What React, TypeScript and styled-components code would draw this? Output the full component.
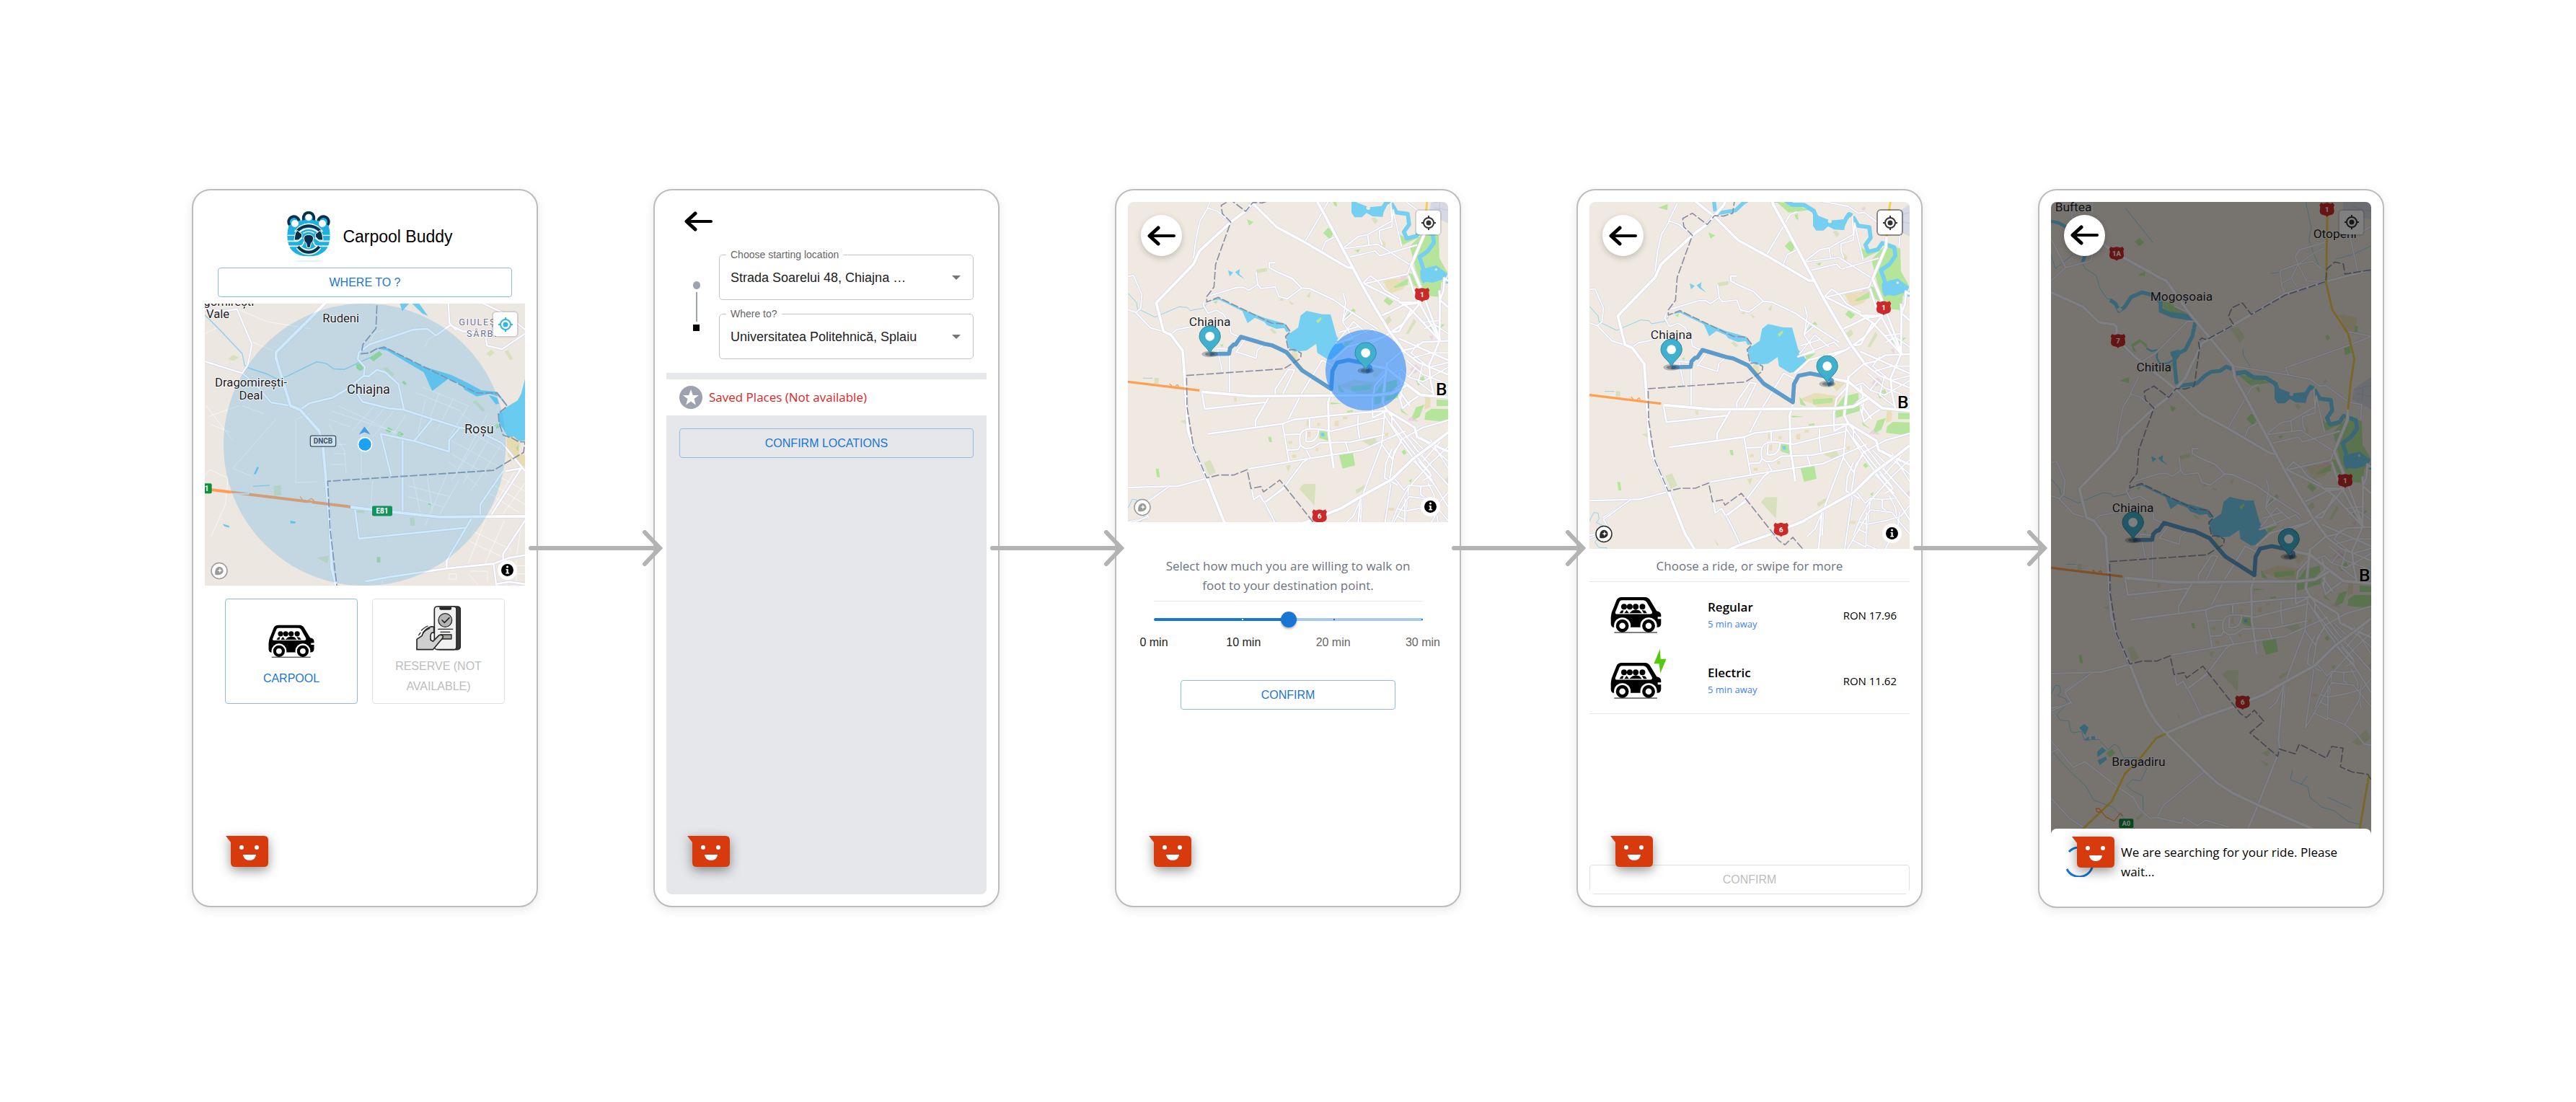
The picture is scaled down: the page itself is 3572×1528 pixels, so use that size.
import React from 'react';
import styled, { createGlobalStyle } from 'styled-components';

const GlobalStyle = createGlobalStyle`
  *, *::before, *::after { box-sizing: border-box; }
  body { margin: 0; background: #fff; }
  button, select, input { font: inherit; }
`;

const sans = '"Liberation Sans", Arial, sans-serif';
const human = '"Open Sans", "Segoe UI", sans-serif';
const mapFont = 'Roboto, "Noto Sans", sans-serif';
const blue = '#1976d2';

/* ---------- page and phone frames ---------- */

const Page = styled.main`
  min-height: 100vh;
  display: flex;
  align-items: center;
  padding: 0 266px 8px;
  font-family: ${human};
  color: #000;
`;

const Phone = styled.section`
  flex: 1 1 0;
  min-width: 0;
  padding: 16px;
  background: #fff;
  border: 2px solid #bcbcbc;
  border-radius: 26px;
  box-shadow: 0 4px 14px rgba(0, 0, 0, 0.09);
`;

const Screen = styled.div`
  position: relative;
  display: flex;
  flex-direction: column;
  min-height: 960px;
  border-radius: 8px;
  overflow: hidden;
`;

const Connector = styled.div`
  position: relative;
  z-index: 1;
  flex: 0 0 186px;
  margin: 0 -13px;
  display: flex;
  svg { display: block; width: 100%; height: 50px; }
`;

const FlowArrow = () => (
  <Connector aria-hidden="true">
    <svg viewBox="0 0 186 50" fill="none" stroke="#b3b3b3" strokeWidth="6" strokeLinecap="round">
      <path d="M3 25H181M161 3L182 25L161 47" />
    </svg>
  </Connector>
);

/* ---------- shared controls ---------- */

const OutlineButton = styled.button`
  display: flex;
  align-items: center;
  justify-content: center;
  height: 41px;
  padding: 0 16px;
  font-family: ${sans};
  font-size: 16px;
  line-height: 28px;
  color: ${blue};
  background: transparent;
  border: 1px solid #8fbbe9;
  border-radius: 4px;
  text-transform: uppercase;
  cursor: pointer;
  &:disabled { color: #bdbdbd; border-color: #e0e0e0; cursor: default; }
`;

const ChatButton = styled.button`
  position: absolute;
  left: 28px;
  bottom: 38px;
  width: 60px;
  height: 43px;
  padding: 0;
  border: 0;
  background: none;
  filter: drop-shadow(0 5px 8px rgba(0, 0, 0, 0.42));
  cursor: pointer;
  svg { display: block; width: 60px; height: 43px; }
`;

const Chat = () => (
  <ChatButton aria-label="Open chat">
    <svg viewBox="0 0 60 43">
      <path d="M1 0H54Q60 0 60 6V37Q60 43 54 43H14Q8 43 8 37V9Z" fill="#d63a0d" />
      <circle cx="23" cy="16" r="3" fill="#fff" />
      <circle cx="44" cy="16" r="3" fill="#fff" />
      <path d="M25 26H43A9 8 0 0 1 25 26Z" fill="#fff" />
    </svg>
  </ChatButton>
);

const ArrowLeft = () => (
  <svg width="40" height="28" viewBox="0 0 40 28" fill="none" stroke="#000" strokeLinecap="round" strokeLinejoin="round" aria-hidden="true">
    <path d="M4 14H37" strokeWidth="4" />
    <path d="M15 3L3 14L15 25" strokeWidth="5" />
  </svg>
);

const RoundBack = styled.button`
  position: absolute;
  top: 18px;
  left: 18px;
  width: 57px;
  height: 57px;
  display: grid;
  place-items: center;
  padding: 0;
  border: 0;
  border-radius: 50%;
  background: #fff;
  box-shadow: 0 3px 8px rgba(0, 0, 0, 0.2);
  cursor: pointer;
`;

const Back = () => (
  <RoundBack aria-label="Back"><ArrowLeft /></RoundBack>
);

/* ---------- map chrome ---------- */

const MapBox = styled.div<{ $h?: number; $square?: boolean }>`
  position: relative;
  overflow: hidden;
  ${p => (p.$square ? 'aspect-ratio: 1;' : '')}
  ${p => (p.$h ? `height: ${p.$h}px;` : '')}
  > svg { display: block; width: 100%; height: 100%; }
`;

const LocateButton = styled.button<{ $focus?: boolean }>`
  position: absolute;
  top: 12px;
  right: 11px;
  width: 33px;
  height: 33px;
  display: grid;
  place-items: center;
  padding: 0;
  border: 0;
  border-radius: 4px;
  background: #fff;
  box-shadow: 0 0 0 2px ${p => (p.$focus ? 'rgba(0,0,0,.4)' : 'rgba(0,0,0,.1)')};
  cursor: pointer;
`;

const Locate = ({ color = '#333', focus }: { color?: string; focus?: boolean }) => (
  <LocateButton $focus={focus} aria-label="Find my location">
    <svg width="20" height="20" viewBox="0 0 20 20" aria-hidden="true">
      <circle cx="10" cy="10" r="7" fill="none" stroke={color} strokeWidth="2" />
      <circle cx="10" cy="10" r="3.500" fill={color} />
      <path d="M10 0V4M10 16V20M0 10H4M16 10H20" stroke={color} strokeWidth="2" />
    </svg>
  </LocateButton>
);

const InfoButton = styled.button`
  position: absolute;
  right: 11px;
  bottom: 8px;
  width: 27px;
  height: 27px;
  display: grid;
  place-items: center;
  padding: 0;
  border: 0;
  border-radius: 50%;
  background: #fff;
  cursor: pointer;
`;

const MapMark = styled.a`
  position: absolute;
  left: 8px;
  bottom: 8px;
  svg { display: block; }
`;

const MapFooter = ({ tone = '#9a9a98' }: { tone?: string }) => (
  <>
    <MapMark href="#map" aria-label="Map provider">
      <svg width="24" height="25" viewBox="0 0 24 25">
        <circle cx="12" cy="12.5" r="11" fill="#fff" stroke={tone} strokeWidth="1.5" />
        <path d="M6.500 18C5.500 13 7 7.500 12 6.800A5.600 5.600 0 0 1 17.600 12.500C17.600 17 12 19 6.500 18Z" fill={tone} />
        <path d="M12.800 8.500L13.700 11.200L16.400 12L13.700 12.900L12.800 15.600L11.900 12.900L9.200 12L11.900 11.200Z" fill="#fff" />
      </svg>
    </MapMark>
    <InfoButton aria-label="Map information">
      <svg width="17" height="17" viewBox="0 0 17 17">
        <circle cx="8.500" cy="8.500" r="8.500" fill="#000" />
        <circle cx="8.500" cy="4" r="1.500" fill="#fff" />
        <path d="M6.500 7H9.700V12H11V13.500H6.300V12H7.500V8.300H6.500Z" fill="#fff" />
      </svg>
    </InfoButton>
  </>
);

/* ---------- map drawings (three units to the pixel) ---------- */

type Road = [string, number];

const Roads = ({ list }: { list: Road[] }) => (
  <g fill="none" strokeLinejoin="round">
    {list.map(([d, w]) => <path key={'c' + d} d={d} stroke="#d8daea" strokeWidth={w + 5} />)}
    {list.map(([d, w]) => <path key={d} d={d} stroke="#fff" strokeWidth={w} />)}
  </g>
);

const Place = ({ x, y, size = 52, children, fill = '#1f2226', spacing, halo = true }:
  { x: number; y: number; size?: number; children: string; fill?: string; spacing?: number; halo?: boolean }) => (
  <text x={x} y={y} fontFamily={mapFont} fontSize={size} fill={fill} textAnchor="middle" letterSpacing={spacing}
    stroke={halo ? 'rgba(255,255,255,.75)' : 'none'} strokeWidth={halo ? 6 : 0} paintOrder="stroke">{children}</text>
);

const Shield = ({ x, y, children }: { x: number; y: number; children: string }) => (
  <g transform={`translate(${x} ${y})`}>
    <path d="M-24 -29Q-17 -23 -10 -26Q0 -31 10 -26Q17 -23 24 -29L31 -19Q25 -10 29 -2Q32 8 28 15Q24 22 14 23Q4 24 0 30Q-4 24 -14 23Q-24 22 -28 15Q-32 8 -29 -2Q-25 -10 -31 -19Z" fill="#cc2a2a" />
    <text y="10" fontFamily={mapFont} fontSize="29" fontWeight="700" fill="#fff" textAnchor="middle">{children}</text>
  </g>
);

const Pin = ({ x, y }: { x: number; y: number }) => (
  <g transform={`translate(${x} ${y})`}>
    <ellipse cx="0" cy="0" rx="34" ry="13" fill="#203040" opacity=".28" />
    <ellipse cx="0" cy="0" rx="20" ry="8" fill="#203040" opacity=".4" />
    <path d="M0 -3C-8 -28 -44 -44 -44 -74A44 44 0 1 1 44 -74C44 -44 8 -28 0 -3Z" fill="#40b0cf" stroke="#2e8a9c" strokeWidth="3" />
    <circle cy="-74" r="19" fill="#fff" />
  </g>
);

const northRoads: Road[] = [
  ['M158 90L160 140L240 205M245 72L245 115L215 100M72 225L133 345L238 318L250 270M133 345L72 400', 5],
  ['M405 870L372 925L355 1000L345 1080M437 798L402 870L445 885L500 930', 5],
  ['M450 735L505 703L640 568L665 570M585 505L660 540', 5],
  ['M830 755L1060 792L1150 810L1190 838L1215 835L1310 905L1365 915L1360 975', 5],
  ['M1060 792L1048 762L1312 668L1402 632M1308 612L1402 630', 5],
  ['M1348 362L1318 225L1402 175M1210 240L1105 272L1088 300L1100 330L1025 358L1032 420L1045 455', 5],
  ['M1205 265L1165 285L1100 332L1072 388L1095 425M1100 332L1135 400L1215 403M1100 332L1160 320L1200 350M1032 410L1070 390', 4],
  ['M810 1010L880 890L905 845L935 832M878 1050L895 1010L935 990', 5],
  ['M965 1040L1030 990L1070 982L1170 925L1165 850M968 1040L1110 1022L1250 1110M995 1075L1100 1050L1120 1070L1275 1025M1070 985L1075 1028M1120 1000L1118 965L1170 950L1175 880L1210 1030M1120 1000L1130 1025', 5],
  ['M1215 403L1402 355', 9],
];

const midRoads: Road[] = [
  ['M72 382L95 378L130 458L125 515L105 532L72 520M105 532L165 595L222 612', 5],
  ['M250 622L275 603L340 590M500 617L495 580L470 540L440 522L405 535L385 500L390 485', 5],
  ['M412 462L525 428L555 427L575 440L612 415L605 362M612 415L625 432L685 425L700 465L735 475L795 430', 5],
  ['M685 325L660 325L660 345L690 362L755 390L795 430L830 433L930 480L985 520L1110 600', 6],
  ['M500 617L540 635M445 685L465 780M440 680L500 685M520 700L560 645M520 695L605 722L610 690L640 662M495 703L495 870', 5],
  ['M380 865L392 933L650 905M660 882L603 980L603 1005M405 1037L715 995L760 978L900 962L1150 940', 7],
  ['M685 880L685 850L740 768L765 772L712 880M790 878L740 975M788 878L880 730L930 755M740 768L765 772', 6],
  ['M918 860L905 905L908 1040L928 1178', 9],
  ['M715 995L742 1150M725 1040L785 1038M735 1105L780 1102L790 1085M790 1085Q780 1040 800 1025Q820 1010 870 1018L920 1025L1140 970M815 1025L812 1068M828 975L828 1012M812 1068Q850 1075 862 1040L865 1020M790 1085L810 1098L838 1095L870 1075L1000 1070L1140 1040', 6],
  ['M575 1182L820 1140L1045 1105L1225 1025M815 1105L832 1138M978 1075L990 1110M1030 960L1028 1000L1035 1055', 6],
  ['M72 1260L280 1254L400 1222M240 1258L130 1330L155 1385L72 1404', 6],
  ['M820 1142L800 1155L725 1255L640 1325M588 1270L595 1310L622 1292L668 1380L685 1404M640 1320L725 1262', 6],
  ['M968 452L978 490L965 570L985 600L1008 640M965 570L1010 530M985 520L968 560M950 615L1030 590M945 650L1010 570L1068 620M1008 640L940 660L1090 600L1110 620', 5],
  ['M925 730L985 675L1140 632L1215 580L1290 490L1200 490', 8],
  ['M1160 610L1215 690L1280 740L1404 790M1200 640L1404 730M1140 632L1080 660L1060 720', 7],
  ['M1290 490L1220 500L1160 530L1115 550M1240 380L1262 450L1370 650M1250 345L1290 430L1320 510L1372 650', 8],
  ['M1250 520L1370 650M1050 410L1200 485L1250 520L1200 610L1160 615', 8],
  ['M1045 415L1110 400L1235 372L1250 330M1050 410L1080 380L1110 400L1140 440L1200 475', 6],
  ['M1368 440L1370 480L1368 650L1325 750L1330 810L1345 880M1404 400L1388 390L1385 440L1370 480L1404 510', 8],
  ['M1404 650L1300 655L1262 680L1215 690L1150 745', 7],
  ['M1300 573L1365 565M1305 600L1345 580L1404 620M1280 660L1250 700L1325 760L1404 740M1260 720L1330 700L1404 700M1270 760L1240 800L1300 820L1404 760M1300 740L1280 820L1345 870M1230 730L1300 790L1404 830M1240 800L1210 770L1180 780', 5],
  ['M1150 740L1140 830L1132 905L1150 940L1265 1010L1275 1050L1350 1085L1404 1110', 10],
  ['M1050 745L1150 765L1230 830L1290 875L1404 885', 11],
  ['M1090 970L1088 900L1100 835L1150 780M1150 940L1090 970M1170 865L1210 830L1200 780M1200 880L1215 930L1250 900L1280 880M1195 850L1245 920M1215 830L1205 900', 7],
  ['M1150 940L1270 1100L1404 1250M1140 960L1210 1070L1290 1180L1345 1245L1404 1340M1140 950L1128 1080L1045 1300L1040 1404M1170 950L1170 1000L1240 1090L1330 1200', 6],
  ['M1128 1080L1170 1140L1210 1060L1300 1010L1404 980M1170 1100L1145 1160L1140 1220L1195 1250M1210 1070L1180 1110L1160 1230', 6],
  ['M1290 1050L1404 1150M1250 1140L1340 1230M1330 1060L1404 1180M1404 1090L1330 1160L1240 1260L1200 1330L1170 1404M1300 1100L1250 1050M1370 1070L1300 1150M1404 1030L1340 1080L1290 1130', 5],
  ['M1280 1150L1335 1210L1300 1230M1320 1240L1345 1290L1362 1404M1240 1260L1225 1404M1160 1230L1165 1260L1140 1404M1180 1220L1220 1270L1240 1250L1290 1255L1340 1250M1290 1255L1290 1290L1320 1310M1404 1280L1362 1330', 5],
];

const southRoads: Road[] = [
  ['M72 708L155 672L130 630L240 550M130 630L160 680', 5],
  ['M72 830L165 942L212 918L345 1020L415 1068L440 1115L485 1155L510 1150L615 1175L625 1150L680 1185L715 1162L810 1190', 5],
  ['M72 1070L150 1155L205 1190M72 880L105 865M715 955L540 1100L515 1145', 5],
  ['M1040 590L1018 830L1025 865L940 1080L918 1135L890 1200', 7],
  ['M640 612L670 670L700 735M1040 600L1010 670L978 700', 5],
  ['M1165 540L1130 778L1170 710L1240 590L1330 600L1362 640L1404 690M1225 600L1222 745L1165 715M1195 640L1225 650L1305 635L1355 620M1190 670L1222 685M1362 600L1355 660L1295 765L1222 735M1295 765L1340 800L1375 845L1404 850', 5],
];

const arterials: Road[] = [
  ['M72 448L205 508L272 573L335 582L345 592L345 640L420 715L590 850L690 950L810 1015L985 1118L1008 1120', 10],
  ['M240 205L300 255L345 287L520 385L552 400L640 525L735 640L830 755L835 800L885 890L1000 1105L1045 1190L1100 1285L1160 1385L1215 1460', 11],
  ['M1215 403L1045 455L905 540L830 583L735 640L700 660L630 805L560 885L500 930L370 1050L345 1105L190 1265L220 1385L250 1398L300 1465L312 1634L322 1795L345 1870L400 1995L470 2172L510 2237L550 2282L710 2440L765 2490L830 2532L935 2582L1165 2682', 11],
  ['M1308 935L1305 980L1250 1110L1290 1204', 11],
  ['M380 1636L585 1654L1100 1650L1170 1642L1230 1609', 11],
  ['M550 2282L700 2217L830 2172L960 2120L1040 2072L1170 2000L1255 1917L1340 1854L1404 1804', 11],
];

const boundaries = [
  'M1402 355L1295 372L1288 330L1252 322L1220 350L1215 403L1045 460L905 540L868 492L825 512L810 548L832 583L720 645L700 638L685 652L690 680L668 838L630 850L592 848L562 885L500 838L460 860L465 895L500 930L437 1105L430 1200L400 1240L400 1262L448 1243L670 1350L725 1354L748 1385L728 1405L740 1462L765 1460L793 1475L790 1497L720 1540L316 1568L318 1700L345 1868L400 1994L450 1982L512 1982L568 1960L584 2038L625 2030L636 2052L704 2003L860 2200L885 2217L918 2186L957 2232L900 2280L1015 2378L1022 2348L1088 2368L1105 2327L1217 2385L1240 2337L1287 2344L1276 2422L1325 2443L1390 2453L1404 2475',
];

const parks = [
  'M1245 1030L1310 965L1365 985L1368 1080L1402 1140L1375 1185L1372 1242L1310 1235L1270 1130Z',
  'M1197 975L1230 1000L1290 990L1215 1025Z',
  'M530 480L560 490L655 545L545 525Z', 'M850 790L920 800L985 825L900 835Z',
  'M885 975L905 953L930 972L912 1002Z', 'M420 238L440 222L460 240L440 257Z', 'M567 918L594 930L576 944Z',
  'M358 815L398 800L396 825Z', 'M925 845L938 840L942 865L932 862Z', 'M1015 1048L1038 1042L1030 1056Z',
  'M1290 678L1315 670L1320 700L1296 710Z', 'M1212 630L1225 625L1234 640L1220 648Z', 'M1337 588H1348V612H1335Z',
  'M1240 1142L1255 1145L1282 1205L1262 1195Z', 'M1136 1258L1150 1242L1177 1260L1160 1278Z',
  'M1175 1200L1235 1165L1238 1190L1185 1204Z', 'M975 1325L1010 1288L1020 1300L975 1332Z',
  'M1325 1360L1390 1355L1360 1385L1330 1380Z', 'M427 1262L445 1256L440 1270Z', 'M385 1285L400 1295L397 1305Z', 'M455 1440L470 1438L465 1450Z',
  'M950 1898L1008 1890L1017 1942L965 1955Z', 'M655 1823H668L672 1845H660Z', 'M188 1955L200 1957L205 1992L193 1990Z',
  'M1310 1724L1335 1706L1404 1708V1762L1306 1752Z', 'M1356 1668L1404 1670V1695H1356Z', 'M1255 1740L1270 1700L1305 1690L1285 1740L1260 1752Z',
  'M1094 1650L1130 1600L1190 1585L1197 1660L1130 1680L1098 1690Z', 'M1000 1612L1085 1606L1082 1626L1004 1634Z',
  'M915 1680L965 1684L915 1688Z', 'M867 1800L908 1798L905 1840L868 1828Z', 'M945 1600L975 1640L950 1635Z', 'M1205 1705L1240 1735L1210 1720Z',
  'M1210 1885L1222 1876L1232 1890L1220 1898Z', 'M983 1715L1008 1712V1720L985 1722Z', 'M970 1430L1015 1420L975 1450Z',
  'M1270 1590L1300 1570L1310 1590L1280 1610Z', 'M1240 2005L1255 1998L1248 2015Z', 'M300 2365L325 2347L340 2365L318 2383Z',
  'M405 665L440 643L470 662L474 685L445 655L415 675L428 695L415 693Z', 'M435 375L465 360L462 380L450 378L440 380Z', 'M550 760L580 740L575 765L550 790Z',
];

const scrub = [
  'M605 1128L650 1120V1135L608 1143Z', 'M815 1238L832 1218L828 1245Z', 'M740 1255L762 1270L752 1275Z', 'M662 1378L672 1370L692 1390L680 1395Z',
  'M818 600L850 590L878 635L858 660Z', 'M1228 1395L1262 1332L1270 1345L1240 1395Z', 'M1138 1340L1160 1320L1170 1340L1150 1358Z', 'M290 1758L318 1750L312 1770Z',
  'M388 1930L415 1920L438 1970L410 1985Z', 'M785 2040L802 2020L853 2018L848 2108Z', 'M1042 1838L1095 1822L1115 1852L1090 1865Z', 'M1018 2045L1058 2022L1060 2035L1025 2060Z',
  'M728 1944L750 1940L740 1968Z', 'M590 2190L610 2218L603 2220Z', 'M945 2365L985 2350L975 2380Z', 'M938 2390L978 2410L970 2420Z', 'M1325 2320L1385 2265L1400 2305L1355 2335Z',
  'M182 1578H200V1602H182Z', 'M425 2635L450 2615L458 2622L432 2645Z', 'M1085 915L1100 910L1112 925L1100 938Z', 'M700 1255L715 1245L720 1258Z',
];

const sand = [
  'M1133 1172L1190 1165L1250 1160L1215 1210L1160 1228Z', 'M755 1465L778 1475V1510L765 1520L752 1480Z', 'M945 1612L1010 1585L1118 1600L1095 1640L1050 1660L1000 1630Z',
  'M1265 538L1345 552L1338 612L1300 600Z', 'M1070 1535L1140 1540L1100 1580Z', 'M1128 1002L1145 1018L1140 1040L1125 1020Z', 'M1310 1650L1330 1640V1700L1305 1710Z',
  'M512 1658H525V1676H515Z', 'M932 1758L950 1755L948 1780L932 1778Z', 'M815 1755H828V1778H815Z', 'M820 1803L832 1800V1825H820Z', 'M858 1765H872V1778H858Z', 'M965 1740L985 1738V1750H967Z',
  'M740 1840H755V1853H740Z', 'M852 1870L865 1868V1882H854Z', 'M755 1898L772 1896V1910H756Z', 'M1140 1810L1155 1805V1822H1142Z', 'M1155 2118H1180V2130H1155Z',
];

const pink = ['M1245 1545L1270 1520L1295 1545L1260 1560Z', 'M1235 1755L1260 1730L1278 1760Z', 'M1205 1155L1232 1150L1230 1170H1208Z', 'M1202 818L1215 810L1222 818L1212 828Z', 'M1385 2005L1404 1990V2020Z', 'M1325 1405L1340 1400V1425Z'];

const towns: [string, number, number][] = [
  ['Chiajna', 413, 1362], ['Buftea', 165, 110], ['Otopeni', 1253, 221], ['Mogoșoaia', 615, 484],
  ['Chitila', 500, 778], ['Bragadiru', 436, 2418], ['Măgurele', 853, 2718],
];

const highways: [string, number, number][] = [
  ['1', 1220, 104], ['1A', 345, 287], ['7', 351, 650], ['1', 1296, 1232], ['6', 869, 2154],
];

const BucharestMap = ({ top, height, radius }: { top: number; height: number; radius?: boolean }) => {
  const inView = (y: number) => y > top && y < top + height + 40;
  return (
    <svg viewBox={`72 ${top} 1332 ${height}`} preserveAspectRatio="xMidYMin slice" role="img" aria-label="Map of the route">
      <rect x="0" y="0" width="1500" height="2800" fill="#efe9e1" />
      <path d="M1285 72H1404V145L1290 130ZM1332 850L1404 800V935L1325 895Z" fill="#d6d9e4" />
      <path d="M1345 850L1404 835M1345 870L1404 880M1370 845L1365 900M1320 90L1404 110" stroke="#c3c7dc" strokeWidth="3" />
      <g fill="#d8e0bd">{scrub.map(d => <path key={d} d={d} />)}</g>
      <g fill="#e8deb8">{sand.map(d => <path key={d} d={d} />)}</g>
      <g fill="#ebd3dc">{pink.map(d => <path key={d} d={d} />)}</g>
      <g fill="#b4e59a">{parks.map(d => <path key={d} d={d} />)}</g>
      <g fill="none" stroke="#75cff0" strokeLinejoin="round">
        <path d="M72 152L105 160L140 178L165 280M215 290L203 325" strokeWidth="14" />
        <path d="M318 480L340 495L355 525L378 510L405 468L450 448L497 460L528 490L528 520L570 542L620 548L655 556L672 575L660 630L630 688L585 710L588 770L595 830" strokeWidth="16" />
        <path d="M605 838L680 826L712 795L740 778L775 775L802 757L825 768" strokeWidth="16" />
        <path d="M840 785L880 780L915 802L965 804L1005 828L1018 860L1040 880L1080 878L1125 890L1140 860L1152 842L1165 848" strokeWidth="18" />
        <path d="M1168 852L1190 890L1236 896L1242 940L1220 970L1232 998L1272 988L1290 962L1340 980L1345 1015L1320 1050L1285 1075L1300 1120L1305 1170" strokeWidth="17" />
        <path d="M470 682L490 692L515 688L512 720L525 745L560 742L580 730" strokeWidth="8" />
        <g strokeWidth="3" opacity=".8">
          <path d="M203 330L215 350L260 378L275 430L305 475L330 478M382 98L495 240M1132 72L1155 180L1145 230L1170 300L1190 345M985 370L1020 365M1255 310L1330 290L1402 255M870 682L872 710L902 758M72 290L90 350L165 290" />
          <path d="M72 1225L108 1265L112 1290L185 1325L285 1282L320 1285L330 1298L385 1288L400 1270M135 1579H175" />
          <path d="M72 2120L90 2083L108 2085L112 2110L100 2125L135 2140L140 2160L95 2205L110 2228L145 2230L155 2275L165 2280L200 2275L210 2310L270 2308L310 2350L335 2328L350 2335L375 2385L430 2382L470 2430L445 2480L410 2475L385 2500L410 2520L455 2545L455 2600M75 2355L110 2395L150 2440L215 2500L250 2560L330 2590L420 2680M1077 2435L1068 2475L1140 2505L1150 2550L1200 2590L1250 2605L1310 2650L1360 2662M1112 2495L1138 2460M1222 2548L1322 2594" />
        </g>
      </g>
      <g fill="#75cff0">
        <path d="M1002 840L1075 868L1140 862L1132 908L1090 906L1065 892L1045 910H1015L1002 890Z" />
        <path d="M525 495L545 525L662 542L655 566L570 552L520 530Z" /><path d="M568 695L605 685L608 712L595 728L572 715Z" />
        <path d="M1288 1130L1320 1118L1355 1110L1402 1145L1392 1165L1340 1182L1312 1178L1300 1186L1290 1165Z" />
        <path d="M790 1319L815 1299L880 1313L915 1314L925 1349L940 1404L975 1449L935 1496L905 1502L860 1474L855 1436L815 1464L765 1469L742 1454L728 1404L780 1369Z" />
        <path d="M405 1260L450 1244L550 1292L640 1328L725 1352L748 1385L730 1386L722 1370L690 1374L650 1358L640 1345L600 1328L570 1350L548 1300L450 1252Z" />
        <path d="M489 1130L510 1140L495 1155Z" /><path d="M518 1138L538 1125L535 1145L558 1168L530 1150Z" />
        <path d="M190 2260L210 2243L228 2258L215 2290Z" /><path d="M208 2310L230 2295V2312Z" /><path d="M240 2295H255V2308H240Z" />
        <path d="M265 2358L285 2340L302 2355L265 2382Z" /><path d="M265 2395L300 2378L305 2392L275 2415Z" />
        <path d="M873 1808L888 1806L890 1820L878 1822Z" /><path d="M1395 1170L1404 1160V1185H1395Z" /><path d="M1388 1600H1404V1610Z" />
      </g>
      <path d="M855 1340L875 1325L878 1335L862 1352Z" fill="#b4e59a" />
      <circle cx="1072" cy="871" r="8" fill="#efe9e1" /><circle cx="1354" cy="1127" r="5" fill="#efe9e1" /><path d="M345 518L358 510L370 518L358 530Z" fill="#efe9e1" />
      <Roads list={northRoads} />
      <g transform="translate(0 774)"><Roads list={midRoads} /></g>
      <g transform="translate(0 1482)"><Roads list={southRoads} /></g>
      <Roads list={arterials} />
      <g fill="none" strokeLinejoin="round">
        <path d="M1222 72L1217 410L1242 520L1308 620L1334 725L1318 830L1308 935M550 2284L510 2302L440 2390L380 2450L325 2565L205 2680M1394 2460L1356 2680" stroke="#f3cf55" strokeWidth="9" />
        <path d="M72 1594L370 1630" stroke="#ff9f50" strokeWidth="10" />
        <path d="M245 1602L255 1612M270 1612L278 1606L284 1614M280 2612L262 2608L260 2595L272 2595L300 2630L335 2648L360 2615L372 2625" stroke="#ff9f50" strokeWidth="4" />
        <g stroke="#8a8ea3" strokeWidth="5">{boundaries.map(d => <path key={d} d={d} strokeDasharray="32 9" />)}</g>
        <path d="M413 1479L493 1477L497 1454L512 1439H520L542 1407L640 1436L670 1442L732 1471L797 1547L918 1624L923 1549L942 1514L990 1504L1050 1516L1080 1532V1546L1063 1552" stroke="#3d8bc5" strokeWidth="17" opacity=".82" />
      </g>
      {radius && <circle cx="1062" cy="1546" r="168" fill="#1a83ff" opacity=".56" />}
      {towns.filter(([, , y]) => inView(y)).map(([name, x, y]) => <Place key={name} x={x} y={y}>{name}</Place>)}
      <text x="1353" y="1650" fontFamily={mapFont} fontSize="74" fontWeight="500" stroke="#fff" strokeWidth="6" paintOrder="stroke">B</text>
      {highways.filter(([, , y]) => inView(y)).map(([no, x, y]) => <Shield key={x} x={x} y={y}>{no}</Shield>)}
      {inView(2660) && (
        <>
          <rect x="355" y="2638" width="60" height="38" rx="5" fill="#0f8f3c" />
          <text x="385" y="2667" fontFamily={mapFont} fontSize="28" fontWeight="700" fill="#fff" textAnchor="middle">A0</text>
        </>
      )}
      <Pin x={413} y={1479} />
      <Pin x={1061} y={1548} />
    </svg>
  );
};

const localMinor: Road[] = [
  ['M84 470L170 475L218 468L280 600L262 680L240 708L84 664M240 708L300 755L360 818L440 830', 6],
  ['M480 845L520 820L615 800L680 765L745 718L765 720L800 695L835 705L890 750L912 845', 7],
  ['M745 718L750 685L720 655L725 630L770 600L950 545L1010 542L1045 567L1105 528L1155 550L1250 560', 7],
  ['M1097 446L1102 520L1130 548M1250 560L1258 605L1320 618L1416 560M1240 446L1345 490L1416 545', 6],
  ['M710 775L740 815L850 840L912 845L1030 880L1145 912L1210 920L1320 970L1416 1075', 7],
  ['M815 935L955 962L1030 880M955 962L1100 1002V960L1145 912M815 935L860 1095M907 960V1225', 7],
  ['M708 1215L725 1328L1170 1287L1195 1250M1195 1250L1090 1410V1440M1325 1075L1230 1200V1240M1275 1240L1400 1065L1335 1075', 7],
  ['M752 1488L850 1472L1090 1440L1285 1422L1350 1400L1416 1390M1285 1422L1297 1504M1416 1260L1325 1385V1408M1297 1498L1350 1490L1416 1498', 7],
];

const minorLanes = 'M84 560L130 540M345 515L525 542M225 470L345 515M280 590L370 625M100 870L225 830M90 830L200 960M110 900L190 930M240 830L330 860M380 880L200 1065L280 1095M84 1090L105 1070L180 1100L170 1200L110 1320M462 880V1118L550 1115M465 880L520 860M600 900L665 1000L672 1085M735 930V1090M590 975H670M610 850L900 935M640 830L930 955M600 880L690 910M790 830L700 920M830 840L740 940M870 850L780 950M920 865L850 960M960 780L1150 850M990 760L1180 830M1000 810L970 940M1060 780L1010 900M1120 800L1050 920M1180 830L1100 950M780 560L830 545M770 590L800 545M1000 610L1015 580L1060 560M1150 860L1270 940M1130 900L1330 1000M1110 960L1310 1060M1110 1010L1260 1090M1100 1040L1220 1130M1260 860L1130 1080M1300 900L1160 1120M1330 960L1190 1150M1240 930L1110 1110M950 1100L980 1230M1010 1100L1030 1220M930 1130L1100 1170M930 1170L1080 1210M1090 1090L1000 1280M1140 1110L1060 1240M1300 1090L1416 1150M1290 1130L1416 1200M1270 1160L1390 1230M1370 1080L1270 1230M1416 1120L1320 1240M1200 1300L1360 1370M1190 1340L1330 1400M1250 1260L1180 1420M1330 1260L1250 1420M1400 1280L1380 1400M1100 1460H1130V1480H1100ZM1180 1460L1220 1500M1190 1450H1260V1490M1320 1430H1416M1310 1460H1416M1340 1410V1500M1380 1410V1500M620 1010H670M610 1050H670M775 1210L782 1110M820 1500L825 1480';

const ChiajnaMap = () => (
  <svg viewBox="84 496 1332 1174" preserveAspectRatio="xMidYMid slice" role="img" aria-label="Map around Chiajna">
    <g transform="scale(1 1.11)">
      <rect x="0" y="400" width="1500" height="1200" fill="#ece7e0" />
      <g fill="#d8e0bd"><path d="M182 655L200 640L225 648L205 662Z" /><path d="M370 1130L400 1128L403 1165L372 1168Z" /><path d="M550 1400L600 1392L595 1420Z" /><path d="M1255 635L1275 620L1290 632L1270 645Z" /><path d="M1330 625L1345 622L1367 655L1355 660Z" /><path d="M825 690L840 685L872 712L865 720Z" /><path d="M1198 815L1210 808L1250 845L1240 853Z" /><path d="M936 1250L955 1248L958 1280H940Z" /><path d="M715 1222H748V1232H720Z" /></g>
      <path d="M1338 950L1375 945L1395 970L1390 1010L1416 1015V1060L1345 1020Z" fill="#e6dbb2" />
      <g fill="#a5e08c"><path d="M768 650L810 625L823 638L785 664Z" /><path d="M712 675L735 670L745 692L730 700L715 690Z" /><path d="M835 922L848 910L867 920L852 932Z" /><path d="M880 937L892 926L912 936L900 948Z" /><path d="M903 742L912 736L925 748L915 752Z" /><path d="M1290 905L1300 896L1310 910L1298 916Z" /><path d="M800 1397H814V1417H800Z" /><path d="M1010 1200L1018 1194L1030 1205Z" /><path d="M1378 990L1388 975V1000Z" /></g>
      <g fill="none" stroke="#8fd0ee" strokeWidth="4"><path d="M84 490L130 530L240 635L250 680L270 690L340 710L385 730L425 720L550 665L590 672L620 692L665 694L720 670L770 650" /><path d="M285 1132L355 1128" strokeWidth="3" /></g>
      <g fill="#6acbf0">
        <path d="M795 615L830 608L985 680L1110 715L1180 745L1235 772L1300 778L1345 830L1330 820L1305 795L1270 785L1215 795L1165 770L1150 750L1095 730L1030 775L995 705L840 622Z" />
        <path d="M1265 790L1300 800L1308 822L1295 825Z" /><path d="M1416 730V960L1390 962L1370 945L1345 950L1325 915L1310 900L1305 860L1345 832L1385 810L1400 785Z" />
        <path d="M895 446H935L905 475Z" /><path d="M945 446H975L1012 493L990 485Z" /><path d="M288 1085L302 1058L309 1062L295 1088Z" /><path d="M158 1272L185 1280L187 1287L165 1282Z" /><path d="M440 1260L462 1265L460 1271H440Z" />
      </g>
      <path d={minorLanes} fill="none" stroke="#fff" strokeWidth="2.500" opacity=".75" />
      <Roads list={localMinor} />
      <Roads list={[
        ['M590 440L520 505L380 630V650L440 830L480 845L560 925L575 975L590 1130L605 1290L612 1440L632 1510', 11],
        ['M690 1210L800 1222L1060 1247L1416 1244', 10],
      ]} />
      <path d="M84 1142L690 1209" stroke="#ff9c55" strokeWidth="11" />
      <path d="M190 1160L265 1160L270 1152L200 1142M470 1200L530 1195" stroke="#dfe6f5" strokeWidth="5" fill="none" />
      <path d="M480 1170L490 1182M515 1185Q530 1170 540 1190" stroke="#ff9c55" strokeWidth="4" fill="none" />
      <path d="M800 454L796 540L742 600L735 635L770 632L795 618L830 610L1215 782L1300 782L1342 832L1305 858L1308 895L1325 940L1360 950L1390 965L1416 965L1410 1005L1285 1072L595 1113L605 1290L633 1504" fill="none" stroke="#8a90a8" strokeWidth="5" strokeDasharray="32 8" />
    </g>
    <circle cx="749" cy="1083" r="587" fill="#3ea8e6" opacity=".24" />
    <Place x={138} y={556} size={50}>Vale</Place>
    <Place x={146} y={504} size={50}>Dragomirești</Place>
    <Place x={650} y={575} size={50}>Rudeni</Place>
    <Place x={276} y={841} size={50}>Dragomirești-</Place>
    <Place x={276} y={895} size={50}>Deal</Place>
    <Place x={765} y={870} size={54}>Chiajna</Place>
    <Place x={1225} y={1037} size={54}>Roșu</Place>
    <Place x={1240} y={587} size={38} spacing={5} fill="#6d7299">GIULEȘTI</Place>
    <Place x={1238} y={633} size={38} spacing={5} fill="#6d7299">SÂRBI</Place>
    <rect x="523" y="1046" width="106" height="45" rx="8" fill="#cfe2ee" stroke="#41536a" strokeWidth="4" />
    <text x="576" y="1078" fontFamily={mapFont} fontSize="30" fontWeight="700" fill="#41536a" textAnchor="middle">DNCB</text>
    <rect x="780" y="1338" width="84" height="42" rx="6" fill="#15925c" />
    <text x="822" y="1369" fontFamily={mapFont} fontSize="30" fontWeight="700" fill="#fff" textAnchor="middle">E81</text>
    <rect x="60" y="1244" width="53" height="42" rx="6" fill="#0f8f3c" />
    <text x="92" y="1275" fontFamily={mapFont} fontSize="30" fontWeight="700" fill="#fff" textAnchor="middle">1</text>
    <path d="M748 1008L773 1041L748 1031L725 1041Z" fill="#459be6" />
    <circle cx="750" cy="1082" r="31" fill="#fff" />
    <circle cx="750" cy="1082" r="26" fill="#1da1f2" />
  </svg>
);

/* ---------- illustrations ---------- */

const Van = ({ width, electric }: { width: number; electric?: boolean }) => (
  <svg width={width} height={Math.round(width * 0.73)} viewBox="155 172 220 160" overflow="visible" aria-hidden="true">
    <path d="M160 262L163 243L183 192Q189 178 205 178H303Q316 178 324 190L352 236Q370 240 370 252V260H356V269H370V288Q370 304 354 304H168Q160 300 160 290Z" />
    <path d="M206 191H296Q305 191 310 199L332 238Q335 249 324 249H187Q176 249 179 240L196 198Q199 191 206 191Z" fill="#fff" />
    <circle cx="215" cy="218" r="12" /><circle cx="239" cy="218" r="12" /><circle cx="264" cy="218" r="12" /><circle cx="292" cy="218" r="12" />
    <path d="M196 245L203 235L213 232L210 245ZM216 245L226 232L236 245ZM237 245L250 234L264 230L280 234L290 245ZM290 232L304 235L311 245H297Z" />
    <circle cx="208" cy="298" r="35" fill="#fff" /><circle cx="318" cy="298" r="35" fill="#fff" />
    <circle cx="208" cy="298" r="20" fill="#fff" stroke="#000" strokeWidth="14" />
    <circle cx="318" cy="298" r="20" fill="#fff" stroke="#000" strokeWidth="14" />
    <path d="M174 326H354" stroke="#000" strokeWidth="3" />
    {electric && <path d="M366 120L340 182H362L367 222L392 162H368Z" fill="#55c80a" />}
  </svg>
);

const Logo = () => (
  <svg width="60" height="71" viewBox="28 24 180 213" fill="none" aria-hidden="true">
    <ellipse cx="118" cy="234" rx="62" ry="3" fill="#ddf3f9" />
    <path d="M36 84L60 104L90 62L118 78L146 62L176 104L200 84Q207 105 207 128Q207 214 118 214Q29 214 29 128Q29 105 36 84Z" fill="#1fb0e2" />
    <circle cx="118" cy="52" r="26" fill="#1fb0e2" /><circle cx="61" cy="77" r="27" fill="#1fb0e2" /><circle cx="175" cy="77" r="27" fill="#1fb0e2" />
    <path d="M98 64A22 22 0 1 1 138 64M39 84A22 22 0 1 1 78 66M197 84A22 22 0 1 0 158 66" stroke="#08304a" strokeWidth="11" />
    <circle cx="118" cy="52" r="14" fill="#fff" /><circle cx="61" cy="78" r="15" fill="#fff" /><circle cx="175" cy="78" r="15" fill="#fff" />
    <path d="M60 112Q84 80 118 79Q152 80 176 112" stroke="#fff" strokeWidth="5" />
    <path d="M71 109Q90 88 118 88Q146 88 165 109" stroke="#08304a" strokeWidth="12" />
    <path d="M76 117Q94 99 118 99Q142 99 160 117" stroke="#fff" strokeWidth="6" />
    <path d="M95 118Q118 105 141 118" stroke="#fff" strokeWidth="4" />
    <path d="M62 120L70 106L90 122V132L76 147H58Z" fill="#08304a" stroke="#fff" strokeWidth="3" />
    <path d="M174 120L166 106L146 122V132L160 147H178Z" fill="#08304a" stroke="#fff" strokeWidth="3" />
    <path d="M30 127H60M206 127H176" stroke="#fff" strokeWidth="4" />
    <path d="M29 151H72L92 137M207 151H164L144 137M32 172H84Q98 166 98 152M204 172H152Q138 166 138 152" stroke="#fff" strokeWidth="5" />
    <path d="M68 180Q88 206 118 206Q148 206 168 180" stroke="#fff" strokeWidth="5" />
    <path d="M74 174Q92 197 118 197Q144 197 162 174" stroke="#08304a" strokeWidth="12" />
    <path d="M82 170Q98 188 118 188Q138 188 154 170" stroke="#fff" strokeWidth="5" />
    <path d="M98 141Q98 124 118 124Q138 124 138 141Q138 152 128 160L124 178H112L108 160Q98 152 98 141Z" fill="#08304a" stroke="#fff" strokeWidth="3" />
  </svg>
);

const PhoneInHand = () => (
  <svg width="62" height="62" viewBox="0 0 186 186" strokeLinejoin="round" strokeLinecap="round" aria-hidden="true">
    <rect x="86" y="3" width="98" height="179" rx="12" fill="#3a3a3a" stroke="#262626" strokeWidth="5" />
    <rect x="76" y="3" width="92" height="179" rx="12" fill="#f1f1f1" stroke="#262626" strokeWidth="5" />
    <path d="M97 5H147V12Q147 17 141 17H103Q97 17 97 12Z" fill="#262626" />
    <circle cx="121" cy="60" r="28" fill="#b5b5b5" stroke="#262626" strokeWidth="4" />
    <path d="M108 60L118 70L138 50" fill="none" stroke="#262626" strokeWidth="5" />
    <path d="M92 97H152M102 109H140" stroke="#262626" strokeWidth="4" />
    <rect x="104" y="120" width="43" height="18" fill="#a6a6a0" stroke="#262626" strokeWidth="4" />
    <path d="M3 139L24 125Q32 102 50 92Q62 84 74 88V112Q62 108 60 124V142L70 148L96 122Q107 117 112 128Q112 134 102 144L70 182H3Z" fill="#cfcfcf" stroke="#262626" strokeWidth="5" />
    <path d="M11 122L18 112M22 102Q34 90 48 84M28 112Q38 100 56 94" fill="none" stroke="#262626" strokeWidth="4" />
  </svg>
);

/* ---------- screen 1 : home ---------- */

const Brand = styled.header`
  display: flex;
  justify-content: center;
  align-items: center;
  gap: 17px;
  padding: 12px 0 8px 14px;
  svg { display: block; }
`;

const BrandName = styled.h1`
  margin: 0;
  font-family: ${sans};
  font-weight: 400;
  font-size: 23px;
  line-height: 32px;
`;

const Inset = styled.div<{ $bottom?: number }>`
  display: grid;
  padding: 0 18px ${p => p.$bottom ?? 0}px;
`;

const Choices = styled.div`
  display: grid;
  grid-template-columns: 1fr 1fr;
  gap: 20px;
  padding: 18px 28px;
`;

const ChoiceButton = styled(OutlineButton)`
  flex-direction: column;
  gap: 8px;
  height: 146px;
`;

const VanFrame = styled.span`
  display: grid;
  place-items: end center;
  height: 68px;
  padding-bottom: 6px;
`;

const HomeScreen = () => (
  <Screen>
    <Brand><Logo /><BrandName>Carpool Buddy</BrandName></Brand>
    <Inset $bottom={9}><OutlineButton>Where to ?</OutlineButton></Inset>
    <MapBox $h={391}>
      <ChiajnaMap />
      <Locate color="#33b5e5" />
      <MapFooter />
    </MapBox>
    <Choices>
      <ChoiceButton><VanFrame><Van width={66} /></VanFrame>Carpool</ChoiceButton>
      <ChoiceButton disabled><PhoneInHand />Reserve (not available)</ChoiceButton>
    </Choices>
    <Chat />
  </Screen>
);

/* ---------- screen 2 : locations ---------- */

const PlainBack = styled.button`
  align-self: flex-start;
  margin: 13px 25px 24px;
  padding: 0;
  border: 0;
  background: none;
  cursor: pointer;
  svg { display: block; }
`;

const TripForm = styled.form`
  display: grid;
  grid-template-columns: 73px 1fr;
  padding: 0 18px 19px 0;
`;

const Timeline = styled.div`
  display: flex;
  flex-direction: column;
  align-items: center;
  justify-content: center;
  gap: 4px;
  padding: 6px 0 0 10px;
`;
const StartDot = styled.i`width: 10px; height: 11px; border-radius: 50%; background: #9ca3af;`;
const TripLine = styled.i`width: 2px; height: 41px; background: #9ca3af;`;
const EndDot = styled.i`width: 9px; height: 9px; background: #000;`;

const Fields = styled.div`
  display: grid;
  gap: 11px;
  min-width: 0;
`;

const Field = styled.fieldset`
  position: relative;
  min-width: 0;
  margin: 0;
  padding: 0 9px 6px;
  border: 1px solid #c4c4c4;
  border-radius: 5px;
  font-family: ${sans};
  legend { padding: 0 6px; font-size: 14px; line-height: 16px; color: #666; }
  &::after {
    content: '';
    position: absolute;
    right: 17px;
    top: 21px;
    border: 6px solid transparent;
    border-top-color: #757575;
    border-bottom: 0;
    pointer-events: none;
  }
`;

const FieldSelect = styled.select`
  display: block;
  appearance: none;
  width: 100%;
  height: 48px;
  padding: 0 68px 0 6px;
  border: 0;
  background: none;
  font-size: 18px;
  color: #212121;
`;

const SavedPlaces = styled.div`
  display: flex;
  align-items: center;
  gap: 9px;
  padding: 9px 18px;
  border-top: 9px solid #e5e7eb;
  font-size: 17px;
  line-height: 32px;
  color: #e02424;
  svg { display: block; }
`;

const GreyArea = styled.div`
  flex: 1;
  padding-top: 18px;
  background: #e5e7eb;
`;

const LocationsScreen = () => (
  <Screen>
    <PlainBack aria-label="Back"><ArrowLeft /></PlainBack>
    <TripForm>
      <Timeline><StartDot /><TripLine /><EndDot /></Timeline>
      <Fields>
        <Field>
          <legend><label htmlFor="from">Choose starting location</label></legend>
          <FieldSelect id="from"><option>Strada Soarelui 48, Chiajna …</option></FieldSelect>
        </Field>
        <Field>
          <legend><label htmlFor="to">Where to?</label></legend>
          <FieldSelect id="to"><option>Universitatea Politehnică, Splaiul</option></FieldSelect>
        </Field>
      </Fields>
    </TripForm>
    <SavedPlaces>
      <svg width="32" height="32" viewBox="0 0 32 32" aria-hidden="true">
        <circle cx="16" cy="16" r="16" fill="#9ca3af" />
        <path d="M16 5L18.800 13H27L20.500 18L22.800 26.500L16 21.500L9.200 26.500L11.500 18L5 13H13.200Z" fill="#fff" />
      </svg>
      Saved Places (Not available)
    </SavedPlaces>
    <GreyArea><Inset><OutlineButton>Confirm locations</OutlineButton></Inset></GreyArea>
    <Chat />
  </Screen>
);

/* ---------- screen 3 : walking time ---------- */

const Prompt = styled.label`
  display: block;
  padding: 47px 40px 8px;
  text-align: center;
  font-size: 17px;
  line-height: 27px;
  color: #6b7280;
`;

const SliderArea = styled.div`
  margin: 0 35px 0 36px;
  padding-top: 14px;
  border-top: 1px solid #e8eaed;
`;

const Slider = styled.input`
  display: block;
  appearance: none;
  width: 100%;
  height: 22px;
  margin: 0;
  background: none;
  &::-webkit-slider-runnable-track {
    height: 4px;
    border-radius: 2px;
    background:
      linear-gradient(#d6e6f7, #d6e6f7) 33% 50% / 2px 2px no-repeat,
      linear-gradient(${blue}, ${blue}) 67% 50% / 2px 2px no-repeat,
      linear-gradient(${blue}, ${blue}) 100% 50% / 2px 2px no-repeat,
      linear-gradient(90deg, ${blue} 50%, #a7caed 50%);
  }
  &::-webkit-slider-thumb {
    appearance: none;
    width: 22px;
    height: 22px;
    margin-top: -9px;
    border-radius: 50%;
    background: ${blue};
    box-shadow: 0 2px 3px rgba(0, 0, 0, 0.3);
  }
`;

const Marks = styled.div`
  display: flex;
  justify-content: space-between;
  padding: 10px 11px 41px 12px;
  font-family: ${sans};
  font-size: 16px;
  line-height: 22px;
`;

const Mark = styled.span<{ $on?: boolean }>`
  min-width: 48px;
  text-align: center;
  color: ${p => (p.$on ? '#212121' : '#666')};
`;

const Narrow = styled.div`
  display: grid;
  padding: 0 73px;
`;

const WalkScreen = () => (
  <Screen>
    <MapBox $square>
      <BucharestMap top={846} height={1332} radius />
      <Locate />
      <MapFooter />
    </MapBox>
    <Back />
    <Prompt htmlFor="walk">Select how much you are willing to walk on foot to your destination point.</Prompt>
    <SliderArea><Slider id="walk" type="range" min={0} max={30} defaultValue={15} /></SliderArea>
    <Marks>
      <Mark $on>0 min</Mark><Mark $on>10 min</Mark><Mark>20 min</Mark><Mark>30 min</Mark>
    </Marks>
    <Narrow><OutlineButton>Confirm</OutlineButton></Narrow>
    <Chat />
  </Screen>
);

/* ---------- screen 4 : rides ---------- */

const RideTitle = styled.h2`
  margin: 0;
  padding: 10px 0 8px;
  text-align: center;
  font-weight: 400;
  font-size: 17px;
  line-height: 27px;
  color: #6b7280;
`;

const RideList = styled.ul`
  list-style: none;
  margin: 0;
  padding: 0;
  border: solid #e5e7eb;
  border-width: 1px 0;
`;

const Ride = styled.li`
  display: grid;
  grid-template-columns: 136px 1fr auto;
  align-items: center;
  height: 91px;
  padding: 0 18px 0 28px;
  svg { display: block; }
`;

const RideName = styled.strong`
  display: block;
  font-weight: 600;
  font-size: 17px;
  line-height: 24px;
`;

const RideEta = styled.span`
  display: block;
  font-size: 13px;
  line-height: 22px;
  color: #3b82f6;
`;

const Price = styled.span`
  font-size: 15px;
  line-height: 24px;
`;

const Bottom = styled.div`
  display: grid;
  margin-top: auto;
`;

const rides = [
  { name: 'Regular', eta: '5 min away', price: 'RON 17.96' },
  { name: 'Electric', eta: '5 min away', price: 'RON 11.62' },
];

const RidesScreen = () => (
  <Screen>
    <MapBox $h={481}>
      <BucharestMap top={791} height={1443} />
      <Locate focus />
      <MapFooter tone="#2b2b2b" />
    </MapBox>
    <Back />
    <RideTitle>Choose a ride, or swipe for more</RideTitle>
    <RideList>
      {rides.map(r => (
        <Ride key={r.name}>
          <Van width={73} electric={r.name === 'Electric'} />
          <div><RideName>{r.name}</RideName><RideEta>{r.eta}</RideEta></div>
          <Price>{r.price}</Price>
        </Ride>
      ))}
    </RideList>
    <Bottom><OutlineButton disabled>Confirm</OutlineButton></Bottom>
    <Chat />
  </Screen>
);

/* ---------- screen 5 : searching ---------- */

const Shade = styled.div`
  position: absolute;
  inset: 0;
  background: rgba(0, 0, 0, 0.5);
`;

const Sheet = styled.div`
  position: relative;
  flex: 1;
  display: grid;
  grid-template-columns: 42px 1fr;
  gap: 37px;
  margin-top: -8px;
  padding: 19px 18px;
  border-radius: 8px 8px 0 0;
  background: #fff;
  font-size: 17px;
  line-height: 27px;
  p { margin: 0; max-width: 310px; }
  svg { display: block; margin-top: 6px; }
`;

const SearchScreen = () => (
  <Screen>
    <MapBox $h={877}>
      <BucharestMap top={72} height={2631} />
      <Locate />
      <Shade />
    </MapBox>
    <Back />
    <Sheet role="status">
      <svg width="42" height="42" viewBox="0 0 42 42" fill="none" stroke={blue} strokeWidth="3" aria-hidden="true">
        <path d="M7 7A19 19 0 0 1 40 21A19 19 0 0 1 4 31" />
      </svg>
      <p>We are searching for your ride. Please wait...</p>
    </Sheet>
    <Chat />
  </Screen>
);

const screens = [HomeScreen, LocationsScreen, WalkScreen, RidesScreen, SearchScreen];

export default function App() {
  return (
    <>
      <GlobalStyle />
      <Page>
        {screens.map((Content, i) => (
          <React.Fragment key={i}>
            {i > 0 && <FlowArrow />}
            <Phone><Content /></Phone>
          </React.Fragment>
        ))}
      </Page>
    </>
  );
}
